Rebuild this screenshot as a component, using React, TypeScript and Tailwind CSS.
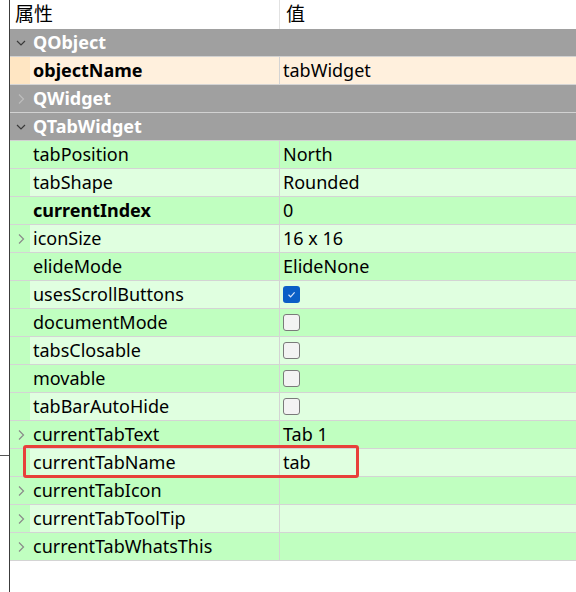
import React from "react";

type Row =
  | { kind: "group"; name: string; open: boolean }
  | { kind: "prop"; name: string; value?: string; bold?: boolean; expand?: boolean; check?: boolean; group: "obj" | "tab" };

const rows: Row[] = [
  { kind: "group", name: "QObject", open: true },
  { kind: "prop", name: "objectName", value: "tabWidget", bold: true, group: "obj" },
  { kind: "group", name: "QWidget", open: false },
  { kind: "group", name: "QTabWidget", open: true },
  { kind: "prop", name: "tabPosition", value: "North", group: "tab" },
  { kind: "prop", name: "tabShape", value: "Rounded", group: "tab" },
  { kind: "prop", name: "currentIndex", value: "0", bold: true, group: "tab" },
  { kind: "prop", name: "iconSize", value: "16 x 16", expand: true, group: "tab" },
  { kind: "prop", name: "elideMode", value: "ElideNone", group: "tab" },
  { kind: "prop", name: "usesScrollButtons", check: true, group: "tab" },
  { kind: "prop", name: "documentMode", check: false, group: "tab" },
  { kind: "prop", name: "tabsClosable", check: false, group: "tab" },
  { kind: "prop", name: "movable", check: false, group: "tab" },
  { kind: "prop", name: "tabBarAutoHide", check: false, group: "tab" },
  { kind: "prop", name: "currentTabText", value: "Tab 1", expand: true, group: "tab" },
  { kind: "prop", name: "currentTabName", value: "tab", group: "tab" },
  { kind: "prop", name: "currentTabIcon", expand: true, group: "tab" },
  { kind: "prop", name: "currentTabToolTip", expand: true, group: "tab" },
  { kind: "prop", name: "currentTabWhatsThis", expand: true, group: "tab" },
];

function Chevron({ open, color }: { open: boolean; color: string }) {
  return (
    <svg width="12" height="12" viewBox="0 0 12 12" fill="none" stroke={color} strokeWidth="1.2">
      {open ? <path d="M2 4 L6 8 L10 4" /> : <path d="M4 1.5 L8.5 6 L4 10.5" />}
    </svg>
  );
}

function CheckBox({ on }: { on: boolean }) {
  if (on) {
    return (
      <div className="flex h-[17px] w-[17px] items-center justify-center rounded-[3px] bg-[#0a5fc6]">
        <svg width="11" height="11" viewBox="0 0 11 11" fill="none" stroke="#d6e4fb" strokeWidth="1.2">
          <path d="M2.5 5.8 L4.6 7.8 L8.6 3.4" />
        </svg>
      </div>
    );
  }
  return <div className="h-[17px] w-[17px] rounded-[3px] border border-[#7a7a7a] bg-[#f3f3f3]" />;
}

export default function App() {
  return (
    <div
      className="flex h-[592px] w-[576px] overflow-hidden bg-white text-[18px] text-black"
      style={{ fontFamily: '"Noto Sans", "Noto Sans CJK SC", sans-serif' }}
    >
      <div className="w-[10px] shrink-0 border-r border-[#3c3c3c]">
        <div className="h-[455px]" />
        <div className="h-px bg-[#555]" />
      </div>
      <div className="relative flex-1">
        <div className="flex h-[29px] items-center text-[19px]">
          <div className="w-[270px] border-r border-[#e2e2e2] pl-[5px] leading-[29px]">属性</div>
          <div className="pl-[6px]">值</div>
        </div>
        {rows.map((r, i) => {
          if (r.kind === "group") {
            return (
              <div key={r.name} className="flex h-[28px] items-center border-b border-[#d2d2d2] bg-[#a0a0a0]">
                <div className="flex w-[20px] justify-center pl-[1px]">
                  <Chevron open={r.open} color={r.open ? "#3a3a3a" : "#bdbdbd"} />
                </div>
                <div className="pl-[3px] font-bold text-white">{r.name}</div>
              </div>
            );
          }
          const alt = i % 2 === 1;
          const base = r.group === "obj" ? "bg-[#ffe6c3]" : "bg-[#c0ffc0]";
          const cell = alt ? (r.group === "obj" ? "bg-[#fff0dd]" : "bg-[#e0ffe0]") : base;
          return (
            <div key={r.name} className="flex h-[28px] border-b border-[#d4d4d4]">
              <div className={`flex w-[20px] items-center justify-center pl-[1px] ${base}`}>
                {r.expand && <Chevron open={false} color="#8a8a8a" />}
              </div>
              <div className={`flex w-[250px] items-center border-r border-[#d4d4d4] pl-[3px] ${cell} ${r.bold ? "font-bold" : ""}`}>
                {r.name}
              </div>
              <div className={`flex flex-1 items-center pl-[3px] ${cell}`}>
                {r.check !== undefined ? <CheckBox on={r.check} /> : r.value}
              </div>
            </div>
          );
        })}
        <div className="pointer-events-none absolute left-[13px] top-[445px] h-[33px] w-[336px] rounded-[3px] border-[3px] border-[#e8403a]" />
      </div>
    </div>
  );
}
